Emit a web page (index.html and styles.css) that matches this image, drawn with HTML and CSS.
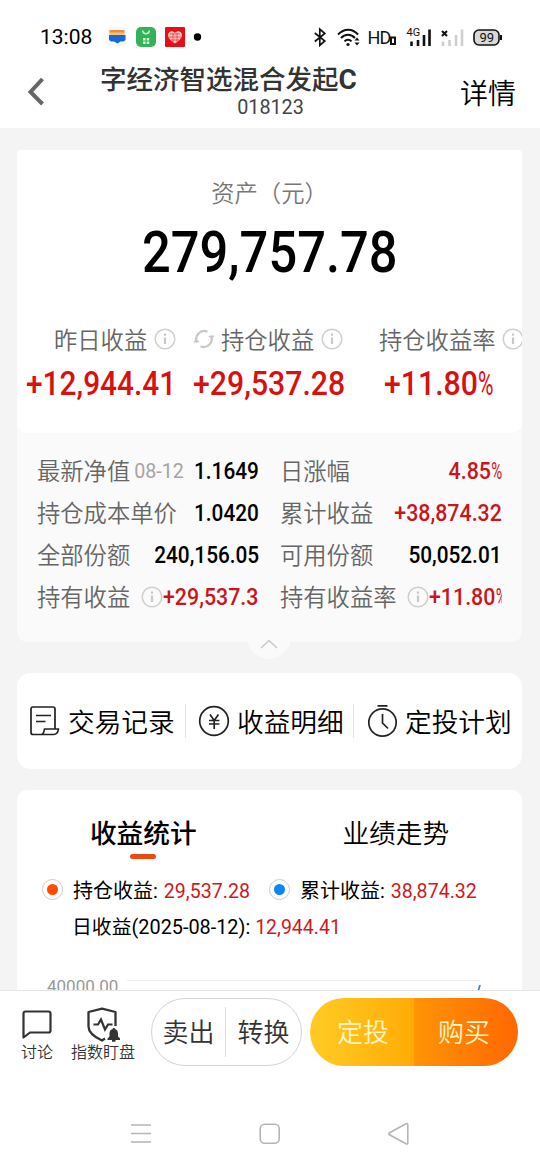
FILE: index.html
```html
<!DOCTYPE html>
<html lang="zh-CN">
<head>
<meta charset="utf-8">
<title>基金持仓</title>
<link rel="stylesheet" href="styles.css">
</head>
<body>
<svg class="defs" width="0" height="0">
  <symbol id="info" viewBox="0 0 22 22"><circle cx="11" cy="11" r="9.8" fill="none" stroke="#cfcfcf" stroke-width="1.5"/><path d="M11 9.5v6.5M11 5.4v2.4" stroke="#c8c8c8" stroke-width="2.2"/></symbol>
</svg>
<div class="screen">
  <div class="status">
    <span class="clock">13:08</span>
    <svg class="apps" width="110" height="24" viewBox="0 0 110 24">
      <rect x=".5" y="2" width="19" height="19" rx="4" fill="#f5f7fa"/>
      <path d="M2.5 5h15v3h-15z" fill="#f08a3c"/><path d="M2.500 7.500h15v2.500h-15z" fill="#f4c27c"/><path d="M2 10h16.500v5l-2 1.500h-3l-3 2-3.500-2h-3l-2-1.500z" fill="#1769d2"/>
      <rect x="29" y="2" width="20" height="20" rx="5" fill="#34b257"/>
      <path d="M35.500 5.500c1 4.500 6 4.500 7 0" fill="none" stroke="#d9f6df" stroke-width="1.200"/>
      <path d="M36 13h2.500v2.500H36zM39.700 13h2.500v2.500h-2.500zM36 16.500h2.500v2.500H36zM39.700 16.500h2.500v2.500h-2.500z" fill="#d9f6df"/>
      <rect x="58" y="2" width="20" height="20" rx="1" fill="#e90d16"/>
      <path d="M68 18.500c-4-2.500-7-5.500-7-8.500 0-4 5-5 7-2 2-3 7-2 7 2 0 3-3 6-7 8.500z" fill="#f9c3c3"/>
      <path d="M62 12h12M63 9h10M64 15h8M66 8v9M70 8v9" stroke="#e42f35" stroke-width=".7"/>
      <circle cx="90.500" cy="12" r="3.700" fill="#000"/>
    </svg>
    <svg class="signals" width="190" height="24" viewBox="0 0 190 24" fill="none" stroke="#111" stroke-width="1.700">
      <path d="M1.800 8l10 8-5 4.300V4.200l5 4.300-10 8"/>
      <path d="M25 9.500c6-6.500 14.500-6.500 20 0M28 13c4-4.500 10-4.500 14 0M31.500 16.300c2-2.200 5-2.200 7 0" stroke-width="2"/>
      <circle cx="35" cy="19.500" r="1.600" fill="#111" stroke="none"/>
      <path d="M41.500 15.500l2.500-3 2.500 3zM41.500 17.500l2.500 3 2.500-3z" fill="#111" stroke="none"/>
      <rect x="78" y="12.500" width="4" height="6.500" stroke-width="2"/>
      <path d="M98.500 16.500V21M105 15v6M111 10v11M116.500 4.500V21" stroke-width="2.600"/>
      <path d="M129 6l5 5M134 6l-5 5" stroke-width="2"/>
      <path d="M130 16.500V21M136.500 15v6M143 10v11M149 4.500V21" stroke="#cfcfcf" stroke-width="2.600"/>
      <rect x="161" y="5" width="25" height="15" rx="5" fill="#d8d8d8" stroke-width="1.600"/>
      <path d="M188 10v5" stroke-width="2"/>
      <text x="54.500" y="19" class="hd">HD</text>
      <text x="93.500" y="11.300" class="net">4G</text>
      <text x="166.500" y="17" class="bat">99</text>
    </svg>
  </div>

  <header class="header">
    <svg width="18" height="30" viewBox="0 0 18 30"><path d="M15.500 2L3.500 15l12 12" fill="none" stroke="#666" stroke-width="4"/></svg>
    <div class="heading"><div class="title"><span>字经济智选混合发起</span><b>C</b></div><div class="code">018123</div></div>
    <span class="more">详情</span>
  </header>

  <main class="content">
    <section class="asset-card">
      <div class="asset">
        <div class="asset-label">资产（元）</div>
        <div class="asset-value"><span class="din">279,757.78</span></div>
        <div class="gains">
          <div class="gain g1"><div class="gain-label"><span>昨日收益</span><svg class="i"><use href="#info"/></svg></div><div class="gain-value"><span class="din">+12,944.41</span></div></div>
          <div class="gain g2"><div class="gain-label"><svg class="refresh" viewBox="0 0 22 22"><path d="M4 14.500A8 8 0 0 1 14.500 3.800M18 7.500A8 8 0 0 1 7.500 18.200" fill="none" stroke="#c8c8c8" stroke-width="2.200"/><path d="M0 14.500l3-3.500 4 3zM22 7.500L19 11l-4-3z" fill="#c8c8c8"/></svg><span>持仓收益</span><svg class="i"><use href="#info"/></svg></div><div class="gain-value"><span class="din">+29,537.28</span></div></div>
          <div class="gain g3"><div class="gain-label"><span>持仓收益率</span><svg class="i"><use href="#info"/></svg></div><div class="gain-value"><span class="din">+11.80<i class="pct">%</i></span></div></div>
        </div>
      </div>
      <div class="details">
        <div class="cell"><span>最新净值</span><small>08-12</small><b class="din">1.1649</b></div>
        <div class="cell"><span>日涨幅</span><b class="din red">4.85<i class="pct">%</i></b></div>
        <div class="cell"><span>持仓成本单价</span><b class="din">1.0420</b></div>
        <div class="cell"><span>累计收益</span><b class="din red">+38,874.32</b></div>
        <div class="cell"><span>全部份额</span><b class="din">240,156.05</b></div>
        <div class="cell"><span>可用份额</span><b class="din">50,052.01</b></div>
        <div class="cell"><span>持有收益</span><svg class="i"><use href="#info"/></svg><b class="din red from-left">+29,537.3</b></div>
        <div class="cell clip"><span>持有收益率</span><svg class="i"><use href="#info"/></svg><b class="din red from-left">+11.80<i class="pct">%</i></b></div>
      </div>
      <div class="fold"><svg width="18" height="10" viewBox="0 0 18 10"><path d="M1 9l8-7.500L17 9" fill="none" stroke="#c8c8c8" stroke-width="1.500"/></svg></div>
    </section>

    <nav class="actions">
      <div class="action"><svg width="32" height="32" viewBox="0 0 32 32" fill="none" stroke="#222" stroke-width="1.700" stroke-linejoin="round"><path d="M26 24.500V4a2 2 0 0 0-2-2H4a2 2 0 0 0-2 2V27.500a2 2 0 0 0 2 2h20.500c3 0 4.500-2 5-5.500H15.500c-.5 3.500-1 5.500-3.500 5.500M7 10.500h15M7 16.500h9.500"/></svg><span>交易记录</span></div>
      <div class="action"><svg width="32" height="32" viewBox="0 0 32 32" fill="none" stroke="#222" stroke-width="1.700"><circle cx="16" cy="16" r="14.300"/><path d="M12 9.500l4.200 6 4.200-6M16.200 15.500V24M11 15.500h10.400M11 19h10.400"/></svg><span>收益明细</span></div>
      <div class="action"><svg width="32" height="34" viewBox="0 0 32 34" fill="none" stroke="#222" stroke-width="1.700"><circle cx="16.500" cy="18.500" r="13.700"/><path d="M11.500 1.800h10M16.500 10v9l5.500 5.500"/></svg><span>定投计划</span></div>
    </nav>

    <section class="chart-card">
      <div class="tabs"><div class="tab active">收益统计</div><div class="tab">业绩走势</div></div>
      <div class="legend">
        <div class="item"><i class="radio orange"></i><span>持仓收益: <em>29,537.28</em></span></div>
        <div class="item"><i class="radio blue"></i><span>累计收益: <em>38,874.32</em></span></div>
      </div>
      <div class="daily">日收益(2025-08-12): <em>12,944.41</em></div>
      <div class="chart"><span>40000.00</span><svg width="354" height="14" viewBox="0 0 354 14"><path d="M0 .5h353" stroke="#ededed"/><path d="M353 5l-3 10" stroke="#2189ee" stroke-width="1.700"/></svg></div>
    </section>
  </main>

  <footer class="toolbar">
    <div class="tool t1"><svg width="32" height="36" viewBox="0 0 32 36"><path d="M4.500 4.500h23a2 2 0 0 1 2 2v17a2 2 0 0 1-2 2H9l-6.500 5V6.500a2 2 0 0 1 2-2z" fill="none" stroke="#333" stroke-width="2.200" stroke-linejoin="round"/></svg><span>讨论</span></div>
    <div class="tool t2"><svg width="36" height="36" viewBox="0 0 36 36"><path d="M30.500 19V5L17 1.600 3.500 5v14.500c0 6 7 11 13.500 14l3-2" fill="none" stroke="#333" stroke-width="2.300" stroke-linejoin="round"/><path d="M8.500 17.500H13l3-5 4 10 3-5h4.500" fill="none" stroke="#333" stroke-width="2.200"/><path d="M22.500 33v-1.500l2-2v-3c0-2.700 1.500-4.200 3.300-4.500V21h2v1c1.700.3 3.200 1.800 3.200 4.500v3l2 2V33zM27 33h3.500v1.800H27z" fill="#333"/></svg><span>指数盯盘</span></div>
    <div class="pair light"><span>卖出</span><span>转换</span></div>
    <div class="pair warm"><span>定投</span><span>购买</span></div>
  </footer>
  <div class="sysnav">
    <svg width="22" height="22" viewBox="0 0 22 22"><path d="M1 2h20M1 10.500h20M1 19h20" stroke="#b5b5b5" stroke-width="1.500"/></svg>
    <svg width="22" height="22" viewBox="0 0 22 22"><rect x="1.200" y="1.200" width="19" height="19" rx="4.500" fill="none" stroke="#b5b5b5" stroke-width="1.600"/></svg>
    <svg width="22" height="24" viewBox="0 0 22 24"><path d="M18 1.800L1.500 10.800q-1.500 1 0 2L18 21.800q1.800.8 1.800-1V2.800q0-1.800-1.800-1z" fill="none" stroke="#b5b5b5" stroke-width="1.600"/></svg>
  </div>
</div>
</body>
</html>
```

FILE: styles.css
```css
* { box-sizing: border-box; }
body { margin: 0; background: #fff; font-family: Roboto, "Noto Sans CJK SC", sans-serif; color: #000; }
.defs { position: absolute; }
svg { display: block; flex: none; }
i, em { font-style: normal; }
span, b, small { white-space: nowrap; }
.screen { width: 540px; height: 1170px; display: flex; flex-direction: column; overflow: hidden; }

.status { height: 60px; flex: none; display: flex; align-items: flex-start; padding: 25px 0 0 40px; }
.clock { width: 67px; font-size: 21px; line-height: 24px; }
.signals { margin-left: 96px; }
.signals text { fill: #111; stroke: none; font-family: Roboto, sans-serif; }
.hd { font-size: 18px; letter-spacing: -.8px; }
.net { font-size: 11px; }
.bat { font-size: 13px; }

.header { height: 68px; flex: none; display: flex; align-items: flex-start; padding-left: 27px; }
.header > svg { margin-top: 17px; }
.heading { margin-left: 55px; width: 340px; }
.title { display: flex; height: 37px; line-height: 40px; font-size: 26.5px; font-weight: 500; color: #333; }
.title b { font-size: 28px; }
.code { width: 341px; text-align: center; font-size: 19.8px; line-height: 22px; color: #444; }
.more { margin-left: 20px; font-size: 28px; line-height: 70px; font-weight: 350; }

.content { height: 862px; flex: none; overflow: hidden; background: #f4f4f4; padding: 22px 18px 0 17px; }
.asset-card { height: 492px; background: #fafafa; border-radius: 4px 4px 10px 10px; position: relative; }
.asset { height: 283px; background: #fff; border-radius: 4px 4px 10px 10px; padding-top: 25px; overflow: hidden; }
.asset-label { text-align: center; font-size: 23.3px; line-height: 38px; color: #777; font-weight: 350; }
.asset-value { height: 80px; line-height: 80px; padding-left: 125px; font-size: 57px; }
.din { display: inline-block; font-weight: 500; transform-origin: left; }
.asset-value .din { transform: scaleX(.888); }
.gains { display: flex; padding-top: 25px; }
.gain { flex: none; }
.gain-label { display: flex; align-items: center; height: 42px; font-size: 23.3px; color: #666; font-weight: 350; }
.i { width: 22px; height: 22px; margin-left: 7px; flex: none; }
.refresh { width: 22px; height: 22px; margin-right: 6px; }
.gain-value { font-size: 32.5px; line-height: 48px; color: #d8100f; white-space: nowrap; }
.gain-value .din { transform: scaleX(.93); }
.g1 { width: 168px; padding-left: 8px; }
.g1 .gain-value .din { transform: scaleX(.918); }
.g1 .gain-value { padding-left: 1px; }
.g1 .gain-label { padding-left: 29px; }
.g2 { width: 192px; padding-left: 8px; }
.g3 .gain-label { padding-left: 2px; }
.g3 .gain-value { padding-left: 7px; }
.pct { display: inline-block; font-weight: 400; transform: scaleX(.7); transform-origin: left; margin-right: -.22em; }

.details { display: grid; grid-template-columns: 222px 222px; column-gap: 21px; padding: 17px 0 0 20px; }
.cell { display: flex; align-items: center; height: 42px; font-size: 23.3px; font-weight: 350; color: #666; }
.cell > span { position: relative; top: -1px; }
.cell small { font-size: 19.7px; font-weight: 400; margin-left: 4px; color: #a5a5a5; }
.cell .din { font-size: 24px; margin-left: auto; transform: scaleX(.866); transform-origin: right; color: #000; }
.cell .i { margin-left: 11px; }
.cell .red { color: #c8161a; transform: scaleX(.89); }
.cell .from-left { margin-left: 0; transform-origin: left; }
.clip { overflow: hidden; }
.fold { position: absolute; left: 230px; top: 465px; width: 44px; height: 44px; padding-top: 14px; border-radius: 50%; background: #fafafa; display: grid; place-items: center; }

.actions { display: flex; margin-top: 31px; height: 96px; background: #fff; border-radius: 14px; align-items: center; }
.action { display: flex; align-items: center; height: 34px; width: 168px; padding-left: 12px; font-size: 26.7px; font-weight: 350; }
.action + .action { border-left: 1px solid #e4e4e4; }
.action span { margin-left: 7px; line-height: 34px; padding-top: 3px; }

.chart-card { margin-top: 21px; height: 230px; background: #fff; border-radius: 10px; }
.tabs { display: grid; grid-template-columns: 1fr 1fr; height: 79px; }
.tab { text-align: center; font-size: 26.7px; line-height: 88px; height: 79px; font-weight: 350; }
.active { font-weight: 500; }
.active::after { content: ""; display: block; width: 26px; height: 5px; margin: -24px auto 0; border-radius: 3px; background: #ea4b12; }
.legend { display: flex; padding-left: 25px; height: 41px; align-items: center; gap: 19px; font-size: 20px; }
.item { display: flex; align-items: center; }
em { color: #d0181b; font-size: 19.6px; }
.legend em { margin-left: 1px; }
.radio { width: 21px; height: 21px; border: 1px solid #ccc; border-radius: 50%; margin-right: 10px; display: grid; place-items: center; }
.radio::before { content: ""; width: 11px; height: 11px; border-radius: 50%; background: #ff4a00; }
.blue::before { background: #0c86f5; }
.daily { padding-left: 55px; font-size: 19.85px; line-height: 36px; white-space: nowrap; }
.daily em { font-size: 19.5px; }
.chart { display: flex; padding: 34px 0 0 30px; font-size: 17px; color: #999; }
.chart span { width: 80px; line-height: 12px; }

.toolbar { height: 102px; flex: none; display: flex; align-items: flex-start; border-top: 1px solid #e5e5e5; padding-top: 7px; color: #333; }
.tool { display: flex; flex-direction: column; align-items: center; font-size: 16px; line-height: 20px; padding-top: 9px; font-weight: 350; }
.t1 { width: 34px; margin-left: 20px; }
.t2 { width: 66px; margin-left: 16px; }
.pair { height: 68px; border-radius: 34px; display: grid; grid-template-columns: 1fr 1fr; overflow: hidden; font-size: 26px; line-height: 70px; text-align: center; font-weight: 350; }
.light { margin-left: 15px; width: 151px; border: 1px solid #d4d4d4; align-items: center; grid-template-columns: 73px 76px; }
.light span { line-height: 52px; height: 50px; }
.light span + span { border-left: 1px solid #ddd; }
.warm { margin-left: 8px; width: 208px; color: #fff5c5; }
.warm span:first-child { background: linear-gradient(90deg, #ffcb25, #ffac05); padding-left: 2px; }
.warm span:last-child { background: linear-gradient(90deg, #ff9406, #ff6800); padding-right: 4px; }
.sysnav { display: flex; align-items: center; padding: 30px 0 0 130px; gap: 107px; }
```
